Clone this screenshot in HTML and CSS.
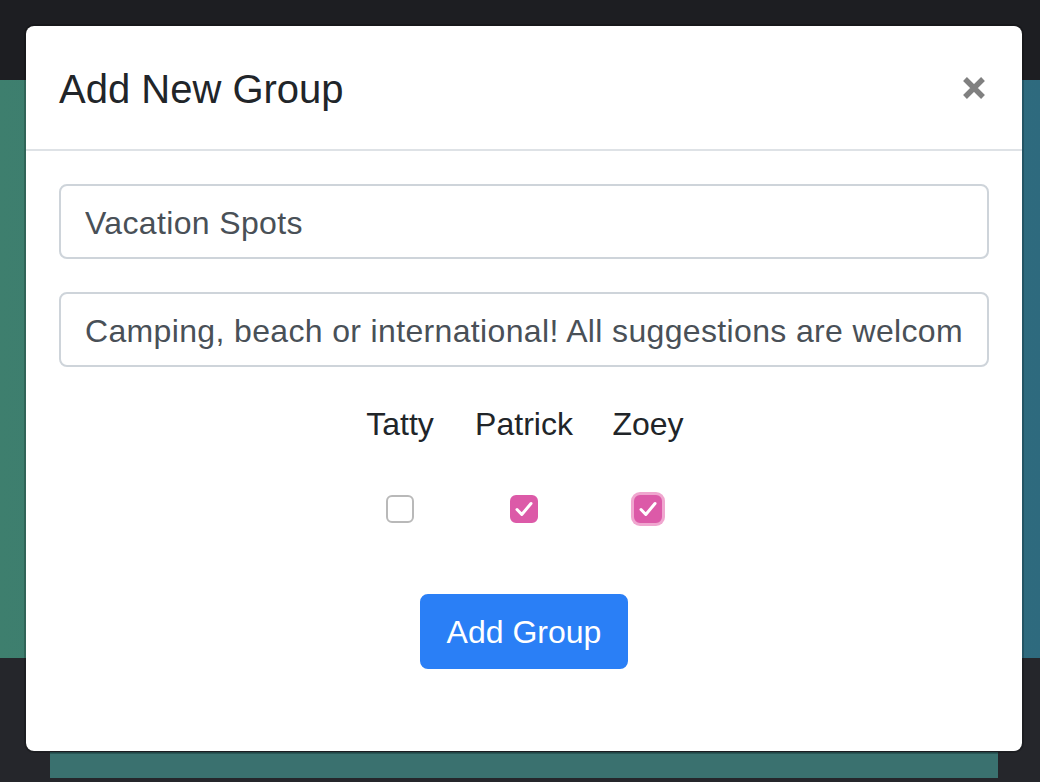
FILE: index.html
```html
<!DOCTYPE html>
<html lang="en">
<head>
<meta charset="utf-8">
<title>Add New Group</title>
<link rel="stylesheet" href="styles.css">
</head>
<body>
<div class="page">
  <div class="topbar"></div>
  <div class="band"></div>
  <div class="lower">
    <div class="strip"></div>
  </div>
</div>

<div class="modal">
  <div class="modal-header">
    <h5 class="modal-title">Add New Group</h5>
    <button class="close" type="button" aria-label="Close">
      <svg width="24" height="24" viewBox="0 0 24 24"><path d="M3 3 L21 21 M21 3 L3 21" stroke="#808080" stroke-width="5.4" stroke-linecap="butt" fill="none"/></svg>
    </button>
  </div>
  <div class="modal-body">
    <div class="field"><input class="form-control" type="text" value="Vacation Spots"></div>
    <div class="field"><input class="form-control" type="text" value="Camping, beach or international! All suggestions are welcome"></div>
    <div class="members">
      <div class="name">Tatty</div>
      <div class="name">Patrick</div>
      <div class="name">Zoey</div>
      <div class="cell"><span class="check"></span></div>
      <div class="cell"><span class="check on"><svg width="22" height="22" viewBox="0 0 22 22"><path d="M4 11.5 L8.8 16.5 L18 5.5" stroke="#fff" stroke-width="3" stroke-linecap="round" stroke-linejoin="round" fill="none"/></svg></span></div>
      <div class="cell"><span class="check on focus"><svg width="22" height="22" viewBox="0 0 22 22"><path d="M4 11.5 L8.8 16.5 L18 5.5" stroke="#fff" stroke-width="3" stroke-linecap="round" stroke-linejoin="round" fill="none"/></svg></span></div>
    </div>
    <div class="actions"><button class="btn" type="button">Add Group</button></div>
  </div>
</div>
</body>
</html>
```

FILE: styles.css
```css
* { box-sizing: border-box; }
html, body { margin: 0; padding: 0; }
body {
  width: 1040px;
  height: 782px;
  overflow: hidden;
  background: #25262b;
  font-family: "Liberation Sans", Arial, sans-serif;
  color: #212529;
}
.page { display: flex; flex-direction: column; height: 782px; }
.topbar { height: 80px; background: #1d1e22; }
.band {
  height: 578px;
  background: linear-gradient(90deg, #3e7f6e 0%, #367679 55%, #2e6a7e 100%);
}
.lower { flex: 1; padding: 94px 42px 0 50px; }
.strip {
  height: 26px;
  background: #3a716f;
  border-top: 2px solid #2a5757;
}

.modal {
  position: absolute;
  left: 24px;
  top: 24px;
  width: 1000px;
  height: 729px;
  background: #fff;
  border: 2px solid rgba(0,0,0,0.2);
  border-radius: 10px;
  background-clip: padding-box;
}
.modal-header {
  display: flex;
  align-items: center;
  justify-content: space-between;
  padding: 33px 33px 30px 33px;
  border-bottom: 2px solid #dee2e6;
}
.modal-title {
  margin: 0;
  font-size: 40px;
  font-weight: 400;
  line-height: 60px;
  color: #212529;
}
.close {
  background: none;
  border: 0;
  padding: 0;
  margin: -2px 3px 0 0;
  width: 24px;
  height: 24px;
  display: flex;
}
.modal-body { padding: 33px 33px 0 33px; }
.field { margin-bottom: 33px; }
.form-control {
  display: block;
  width: 100%;
  height: 75px;
  padding: 14px 24px 10px 24px;
  font-family: inherit;
  font-size: 32px;
  letter-spacing: 0.35px;
  color: #495057;
  background: #fff;
  border: 2px solid #ced4da;
  border-radius: 8px;
  outline: none;
}
.members {
  display: grid;
  grid-template-columns: repeat(3, 124px);
  justify-content: center;
  justify-items: center;
  margin-top: 6px;
}
.name { font-size: 32px; line-height: 48px; }
.cell { padding-top: 47px; height: 75px; }
.check {
  display: flex;
  align-items: center;
  justify-content: center;
  width: 28px;
  height: 28px;
  border: 2px solid #b9b9b9;
  border-radius: 6px;
  background: #fff;
}
.check.on { background: #dc5aa8; border-color: #dc5aa8; }
.check.focus { box-shadow: 0 0 0 3px #f0a6cf; }
.actions { display: flex; justify-content: center; margin-top: 71px; }
.btn {
  height: 75px;
  padding: 2px 25px 0 25px;
  font-family: inherit;
  font-size: 32px;
  color: #fff;
  background: #2a7ff6;
  border: 2px solid #2a7ff6;
  border-radius: 8px;
}
```
